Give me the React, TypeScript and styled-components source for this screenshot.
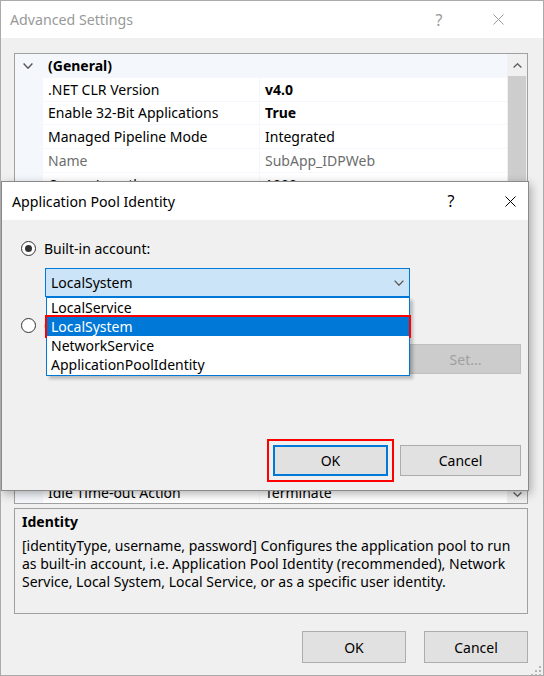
import React from 'react';
import styled, { createGlobalStyle } from 'styled-components';

const GlobalStyle = createGlobalStyle`
  html, body { margin: 0; padding: 0; background: #ffffff; }
  body {
    font-family: "Noto Sans", "Open Sans", sans-serif;
    font-size: 14px;
    color: #000;
  }
  * { box-sizing: border-box; }
`;

const Window = styled.div`
  position: relative;
  width: 544px;
  height: 676px;
  border: 1px solid #aaaaaa;
  background: #f0f0f0;
  display: flex;
  flex-direction: column;
  overflow: hidden;
`;

const TitleBar = styled.div<{ $active?: boolean; $height: number; $padRight: number }>`
  flex: none;
  height: ${(p) => p.$height}px;
  background: #ffffff;
  display: flex;
  align-items: center;
  padding: 0 ${(p) => p.$padRight}px 0 ${(p) => (p.$active ? 10 : 9)}px;
  color: ${(p) => (p.$active ? '#000000' : '#999999')};
`;

const TitleText = styled.div`
  flex: 1;
  font-size: 14.2px;
  white-space: nowrap;
`;

const CaptionButton = styled.div`
  width: 36px;
  height: 100%;
  display: flex;
  align-items: center;
  justify-content: center;
  font-size: 16px;
  & + & { margin-left: 23px; }
`;

const Body = styled.div`
  flex: 1;
  display: flex;
  flex-direction: column;
  padding: 15px 15px 12px 13px;
`;

const Grid = styled.div`
  flex: none;
  height: 451px;
  border: 1px solid #a0a0a0;
  background: #ffffff;
  display: flex;
  overflow: hidden;
`;

const Rows = styled.div`
  flex: 1;
  display: flex;
  flex-direction: column;
  overflow: hidden;
`;

const Row = styled.div<{ $cat?: boolean }>`
  flex: none;
  height: 23.75px;
  display: grid;
  grid-template-columns: 28px 217px 1fr;
  background: ${(p) => (p.$cat ? '#f4f7fc' : '#ffffff')};
`;

const Gutter = styled.div`
  background: #f4f7fc;
  display: flex;
  align-items: center;
  justify-content: center;
  padding-right: 2px;
`;

const Cell = styled.div<{ $bold?: boolean; $gray?: boolean; $divider?: boolean }>`
  display: flex;
  align-items: center;
  padding-left: 5px;
  white-space: nowrap;
  overflow: hidden;
  border-bottom: 1px solid #f4f7fc;
  border-right: ${(p) => (p.$divider ? '1px solid #f4f7fc' : 'none')};
  font-weight: ${(p) => (p.$bold ? 700 : 400)};
  color: ${(p) => (p.$gray ? '#6d6d6d' : '#000000')};
`;

const CatLabel = styled.div`
  grid-column: 2 / 4;
  display: flex;
  align-items: center;
  padding-left: 5px;
  font-weight: 700;
`;

const Scrollbar = styled.div`
  flex: none;
  width: 20px;
  background: #f0f0f0;
  display: flex;
  flex-direction: column;
`;

const ScrollButton = styled.div<{ $h: number }>`
  flex: none;
  height: ${(p) => p.$h}px;
  display: flex;
  align-items: center;
  justify-content: center;
`;

const Thumb = styled.div`
  flex: none;
  height: 260px;
  margin: 0 1px;
  background: #cdcdcd;
`;

const Track = styled.div`
  flex: 1;
`;

const Description = styled.div`
  flex: none;
  margin-top: 4px;
  height: 106px;
  border: 1px solid #a0a0a0;
  padding: 4px 7px;
`;

const DescTitle = styled.div`
  font-weight: 700;
  line-height: 18px;
  margin-bottom: 6px;
`;

const DescText = styled.div`
  line-height: 18px;
  white-space: nowrap;
`;

const Footer = styled.div<{ $gap: number }>`
  margin-top: auto;
  display: flex;
  justify-content: flex-end;
  gap: ${(p) => p.$gap}px;
`;

const Button = styled.div<{ $w: number; $h: number; $default?: boolean; $disabled?: boolean; $mark?: boolean }>`
  width: ${(p) => p.$w}px;
  height: ${(p) => p.$h}px;
  display: flex;
  align-items: center;
  justify-content: center;
  background: ${(p) => (p.$disabled ? '#cccccc' : '#e1e1e1')};
  border: ${(p) => (p.$default ? '2px solid #0078d7' : p.$disabled ? '1px solid #bfbfbf' : '1px solid #adadad')};
  color: ${(p) => (p.$disabled ? '#a0a0a0' : '#000000')};
  outline: ${(p) => (p.$mark ? '2px solid #ff0000' : 'none')};
  outline-offset: 4px;
`;

const Grip = styled.div`
  position: absolute;
  right: 1px;
  bottom: 1px;
  width: 12px;
  height: 12px;
`;

/* Dialog */
const Dialog = styled.div`
  position: absolute;
  left: 0;
  top: 180px;
  width: 528px;
  height: 310px;
  border: 1px solid #8a8a8a;
  background: #f0f0f0;
  box-shadow: 2px 3px 9px rgba(0, 0, 0, 0.3);
  display: flex;
  flex-direction: column;
`;

const DialogBody = styled.div`
  flex: 1;
  display: flex;
  flex-direction: column;
  padding: 18px 7px 14px 19px;
`;

const RadioRow = styled.div<{ $mt?: number }>`
  height: 20px;
  display: flex;
  align-items: center;
  gap: 8px;
  margin-top: ${(p) => p.$mt ?? 0}px;
  white-space: nowrap;
`;

const RadioCircle = styled.div<{ $checked?: boolean }>`
  flex: none;
  width: 15px;
  height: 15px;
  border-radius: 50%;
  border: 1px solid #333333;
  background: #ffffff;
  display: flex;
  align-items: center;
  justify-content: center;
  &::after {
    content: '';
    display: ${(p) => (p.$checked ? 'block' : 'none')};
    width: 7px;
    height: 7px;
    border-radius: 50%;
    background: #333333;
  }
`;

const ComboWrap = styled.div`
  position: relative;
  margin: 10px 0 0 24px;
  width: 365px;
  height: 29px;
  z-index: 2;
`;

const Combo = styled.div`
  height: 100%;
  border: 1px solid #0078d7;
  background: #cce4f7;
  display: flex;
  align-items: center;
  justify-content: space-between;
  padding: 0 5px;
`;

const DropList = styled.div`
  position: absolute;
  top: 100%;
  left: 1px;
  width: 364px;
  background: #ffffff;
  border: 1px solid #0078d7;
  box-shadow: 3px 3px 3px rgba(0, 0, 0, 0.22);
  padding-bottom: 1px;
`;

const ListItem = styled.div<{ $selected?: boolean }>`
  position: relative;
  height: 19px;
  line-height: 19px;
  padding-left: 4px;
  white-space: nowrap;
  background: ${(p) => (p.$selected ? '#0078d7' : '#ffffff')};
  color: ${(p) => (p.$selected ? '#ffffff' : '#000000')};
  outline: ${(p) => (p.$selected ? '2px solid #ff0000' : 'none')};
`;

const CustomRow = styled.div`
  margin: 9px 0 0 26px;
  display: flex;
  gap: 10px;
`;

const TextBox = styled.div`
  width: 353px;
  height: 30px;
  border: 1px solid #cccccc;
  background: #f0f0f0;
`;

const Chevron: React.FC<{ up?: boolean; w: number; h: number; color: string; sw?: number }> = ({ up, w, h, color, sw = 1.2 }) => (
  <svg width={w} height={h} viewBox={`0 0 ${w} ${h}`}>
    <path
      d={up ? `M0.6 ${h - 0.6} L${w / 2} 0.8 L${w - 0.6} ${h - 0.6}` : `M0.6 0.6 L${w / 2} ${h - 0.8} L${w - 0.6} 0.6`}
      fill="none"
      stroke={color}
      strokeWidth={sw}
    />
  </svg>
);

const CloseIcon: React.FC<{ color: string }> = ({ color }) => (
  <svg width="11" height="11" viewBox="0 0 11 11">
    <path d="M0.5 0.5 L10.5 10.5 M10.5 0.5 L0.5 10.5" stroke={color} strokeWidth="1" fill="none" />
  </svg>
);

type GridRow =
  | { cat: string }
  | { name: string; value: string; bold?: boolean; gray?: boolean };

const rows: GridRow[] = [
  { cat: '(General)' },
  { name: '.NET CLR Version', value: 'v4.0', bold: true },
  { name: 'Enable 32-Bit Applications', value: 'True', bold: true },
  { name: 'Managed Pipeline Mode', value: 'Integrated' },
  { name: 'Name', value: 'SubApp_IDPWeb', gray: true },
  { name: 'Queue Length', value: '1000' },
  { name: 'Start Mode', value: 'OnDemand' },
  { cat: 'CPU' },
  { name: 'Limit (percent)', value: '0' },
  { name: 'Limit Action', value: 'NoAction' },
  { name: 'Limit Interval (minutes)', value: '5' },
  { name: 'Processor Affinity Enabled', value: 'False' },
  { name: 'Processor Affinity Mask', value: '4294967295' },
  { name: 'Processor Affinity Mask (64-bit)', value: '4294967295' },
  { cat: 'Process Model' },
  { name: 'Generate Process Model Event', value: '' },
  { name: 'Identity', value: 'ApplicationPoolIdentity' },
  { name: 'Idle Time-out (minutes)', value: '20' },
  { name: 'Idle Time-out Action', value: 'Terminate' },
];

const identities = ['LocalService', 'LocalSystem', 'NetworkService', 'ApplicationPoolIdentity'];

export default function App() {
  return (
    <>
      <GlobalStyle />
      <Window>
        <TitleBar $height={37} $padRight={27}>
          <TitleText>Advanced Settings</TitleText>
          <CaptionButton>?</CaptionButton>
          <CaptionButton>
            <CloseIcon color="#999999" />
          </CaptionButton>
        </TitleBar>
        <Body>
          <Grid>
            <Rows>
              {rows.map((r, i) =>
                'cat' in r ? (
                  <Row key={i} $cat>
                    <Gutter>
                      <Chevron w={10} h={6} color="#555555" sw={1.4} />
                    </Gutter>
                    <CatLabel>{r.cat}</CatLabel>
                  </Row>
                ) : (
                  <Row key={i}>
                    <Gutter />
                    <Cell $divider $gray={r.gray}>{r.name}</Cell>
                    <Cell $bold={r.bold} $gray={r.gray}>{r.value}</Cell>
                  </Row>
                )
              )}
            </Rows>
            <Scrollbar>
              <ScrollButton $h={22}>
                <Chevron up w={9} h={5} color="#606060" sw={1.4} />
              </ScrollButton>
              <Thumb />
              <Track />
              <ScrollButton $h={18}>
                <Chevron w={9} h={5} color="#606060" sw={1.4} />
              </ScrollButton>
            </Scrollbar>
          </Grid>
          <Description>
            <DescTitle>Identity</DescTitle>
            <DescText>
              [identityType, username, password] Configures the application pool to run
              <br />
              as built-in account, i.e. Application Pool Identity (recommended), Network
              <br />
              Service, Local System, Local Service, or as a specific user identity.
            </DescText>
          </Description>
          <Footer $gap={18}>
            <Button $w={104} $h={32}>OK</Button>
            <Button $w={104} $h={32}>Cancel</Button>
          </Footer>
        </Body>
        <Grip>
          <svg width="12" height="12" viewBox="0 0 12 12">
            {[
              [9, 1],
              [9, 5],
              [5, 5],
              [9, 9],
              [5, 9],
              [1, 9],
            ].map(([x, y], i) => (
              <rect key={i} x={x} y={y} width="2" height="2" fill="#b5b5b5" />
            ))}
          </svg>
        </Grip>

        <Dialog>
          <TitleBar $active $height={38} $padRight={0}>
            <TitleText>Application Pool Identity</TitleText>
            <CaptionButton>?</CaptionButton>
            <CaptionButton>
              <CloseIcon color="#000000" />
            </CaptionButton>
          </TitleBar>
          <DialogBody>
            <RadioRow>
              <RadioCircle $checked />
              <span>Built-in account:</span>
            </RadioRow>
            <ComboWrap>
              <Combo>
                <span>LocalSystem</span>
                <Chevron w={10} h={6} color="#555555" sw={1.3} />
              </Combo>
              <DropList>
                {identities.map((id) => (
                  <ListItem key={id} $selected={id === 'LocalSystem'}>
                    {id}
                  </ListItem>
                ))}
              </DropList>
            </ComboWrap>
            <RadioRow $mt={18}>
              <RadioCircle />
              <span>Custom account:</span>
            </RadioRow>
            <CustomRow>
              <TextBox />
              <Button $w={111} $h={30} $disabled>Set...</Button>
            </CustomRow>
            <Footer $gap={12}>
              <Button $w={115} $h={31} $default $mark>OK</Button>
              <Button $w={121} $h={31}>Cancel</Button>
            </Footer>
          </DialogBody>
        </Dialog>
      </Window>
    </>
  );
}
